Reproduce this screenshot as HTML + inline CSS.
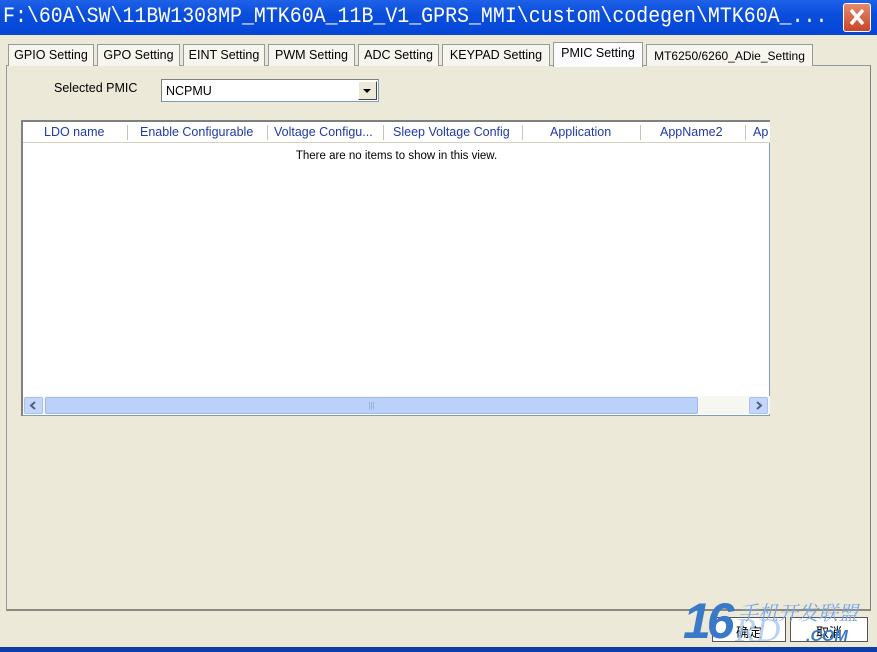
<!DOCTYPE html>
<html><head><meta charset="utf-8"><style>
*{margin:0;padding:0;box-sizing:border-box}
body{width:877px;height:652px;background:#ece9d8;position:relative;overflow:hidden;font-family:"Liberation Sans",sans-serif;font-size:12px}
.title{position:absolute;left:0;top:0;width:877px;height:35px;background:linear-gradient(#1f62e8,#0a4edc 40%,#0546d6);}
.title span{position:absolute;left:3px;top:4px;color:#fff;font-family:"Liberation Mono",monospace;font-size:22px;white-space:nowrap;transform:scaleX(0.905);transform-origin:left}
.close{position:absolute;left:843px;top:3px;width:28px;height:29px;background:linear-gradient(#e58a6c,#c8452a);border:1px solid #fff;border-radius:3px}
.tab{position:absolute;top:44px;height:22px;border:1px solid #919b9c;border-bottom:none;background:#f6f5ee;padding-top:3px;text-align:center;white-space:nowrap;font-size:12.5px;color:#000}
.panel{position:absolute;left:6px;top:65px;width:865px;height:546px;border:1px solid #919b9c;border-right-color:#808080;border-bottom:2px solid #8a8a80;background:#ece9d8}
.list{position:absolute;left:21px;top:120px;width:749px;height:296px;background:#fff;border:1px solid #7f9db9;border-left:2px solid #808080;border-top:2px solid #808080}
.hdr{position:absolute;left:0;top:0;width:747px;height:21px;border-bottom:1px solid #d6d2c2;background:#fff}
.hdr div{position:absolute;top:3px;color:#1f3aa8;font-size:12.5px;white-space:nowrap}
.sep{position:absolute;top:3px;width:1px;height:15px;background:#c7c5b2}
.btn{position:absolute;top:617px;height:25px;border:1px solid #555;background:#fff;text-align:center;padding-top:4px;font-family:"Noto Sans CJK SC",sans-serif;font-size:13px}
.arr{position:absolute;top:1px;width:19px;height:17px;background:#c5d6fb;border:1px solid #a9c0f0;border-radius:2px}
</style></head><body>
<div class="title"><span>F:\60A\SW\11BW1308MP_MTK60A_11B_V1_GPRS_MMI\custom\codegen\MTK60A_...</span>
<div class="close"><svg width="26" height="27"><path d="M7 6 L19 20 M19 6 L7 20" stroke="#fff" stroke-width="3.5"/></svg></div></div>
<div class="panel"></div>
<div class="tab" style="left:8px;width:86px">GPIO Setting</div>
<div class="tab" style="left:97px;width:83px">GPO Setting</div>
<div class="tab" style="left:183px;width:82px">EINT Setting</div>
<div class="tab" style="left:268px;width:87px">PWM Setting</div>
<div class="tab" style="left:358px;width:81px">ADC Setting</div>
<div class="tab" style="left:442px;width:108px">KEYPAD Setting</div>
<div class="tab" style="left:553px;width:90px;top:42px;height:25px;background:#fcfcfe">PMIC Setting</div>
<div class="tab" style="left:646px;width:167px;font-size:12px;padding-top:4px">MT6250/6260_ADie_Setting</div>
<div style="position:absolute;left:54px;top:81px;font-size:12.5px">Selected PMIC</div>
<div style="position:absolute;left:161px;top:79px;width:218px;height:23px;background:#fff;border:1px solid #7f9db9;border-top-color:#808080;border-left-color:#808080">
<span style="position:absolute;left:4px;top:4px;font-size:12.5px">NCPMU</span>
<div style="position:absolute;right:1px;top:1px;width:19px;height:19px;background:#ece9d8;border:1px solid #fff;border-right-color:#444;border-bottom-color:#444"><svg width="17" height="17"><path d="M4 7 L12 7 L8 11 Z" fill="#000"/></svg></div></div>
<div class="list">
<div class="hdr">
<div style="left:21px">LDO name</div><span class="sep" style="left:104px"></span>
<div style="left:117px">Enable Configurable</div><span class="sep" style="left:244px"></span>
<div style="left:251px">Voltage Configu...</div><span class="sep" style="left:360px"></span>
<div style="left:370px">Sleep Voltage Config</div><span class="sep" style="left:499px"></span>
<div style="left:527px">Application</div><span class="sep" style="left:617px"></span>
<div style="left:637px">AppName2</div><span class="sep" style="left:722px"></span>
<div style="left:730px">Ap</div></div>
<div style="position:absolute;left:0;width:747px;top:28px;text-align:center;font-size:11.5px">There are no items to show in this view.</div>
<div style="position:absolute;left:0;top:274px;width:747px;height:18px;background:#f7f7f2">
<div class="arr" style="left:1px"><svg width="17" height="15"><path d="M10 4 L6 7.5 L10 11" stroke="#4d6185" stroke-width="2" fill="none"/></svg></div>
<div style="position:absolute;left:22px;top:1px;width:653px;height:17px;background:#bcd1fa;border:1px solid #9fb7ea;border-radius:2px;text-align:center;color:#8aa4d8;font-size:8px;line-height:15px">|||</div>
<div class="arr" style="left:726px"><svg width="17" height="15"><path d="M7 4 L11 7.5 L7 11" stroke="#4d6185" stroke-width="2" fill="none"/></svg></div>
</div></div>
<div class="btn" style="left:712px;width:74px">确定</div>
<div class="btn" style="left:790px;width:78px">取消</div>
<div style="position:absolute;left:683px;top:592px;font:italic bold 50px 'Liberation Sans',sans-serif;color:#3a78c8;letter-spacing:-4px">16</div>
<div style="position:absolute;left:738px;top:597px;font:20px 'Noto Serif CJK SC',serif;color:#7aa6e8;font-style:italic">手机开发联盟</div>
<div style="position:absolute;left:735px;top:612px;font:italic 34px 'Liberation Serif',serif;color:#a8c8f0;opacity:.8">RD</div>
<div style="position:absolute;left:806px;top:628px;font:italic bold 16px 'Liberation Sans',sans-serif;color:#3a78c8">.COM</div>
<div style="position:absolute;left:0;top:647px;width:877px;height:5px;background:#0b3ea8"></div>
</body></html>
